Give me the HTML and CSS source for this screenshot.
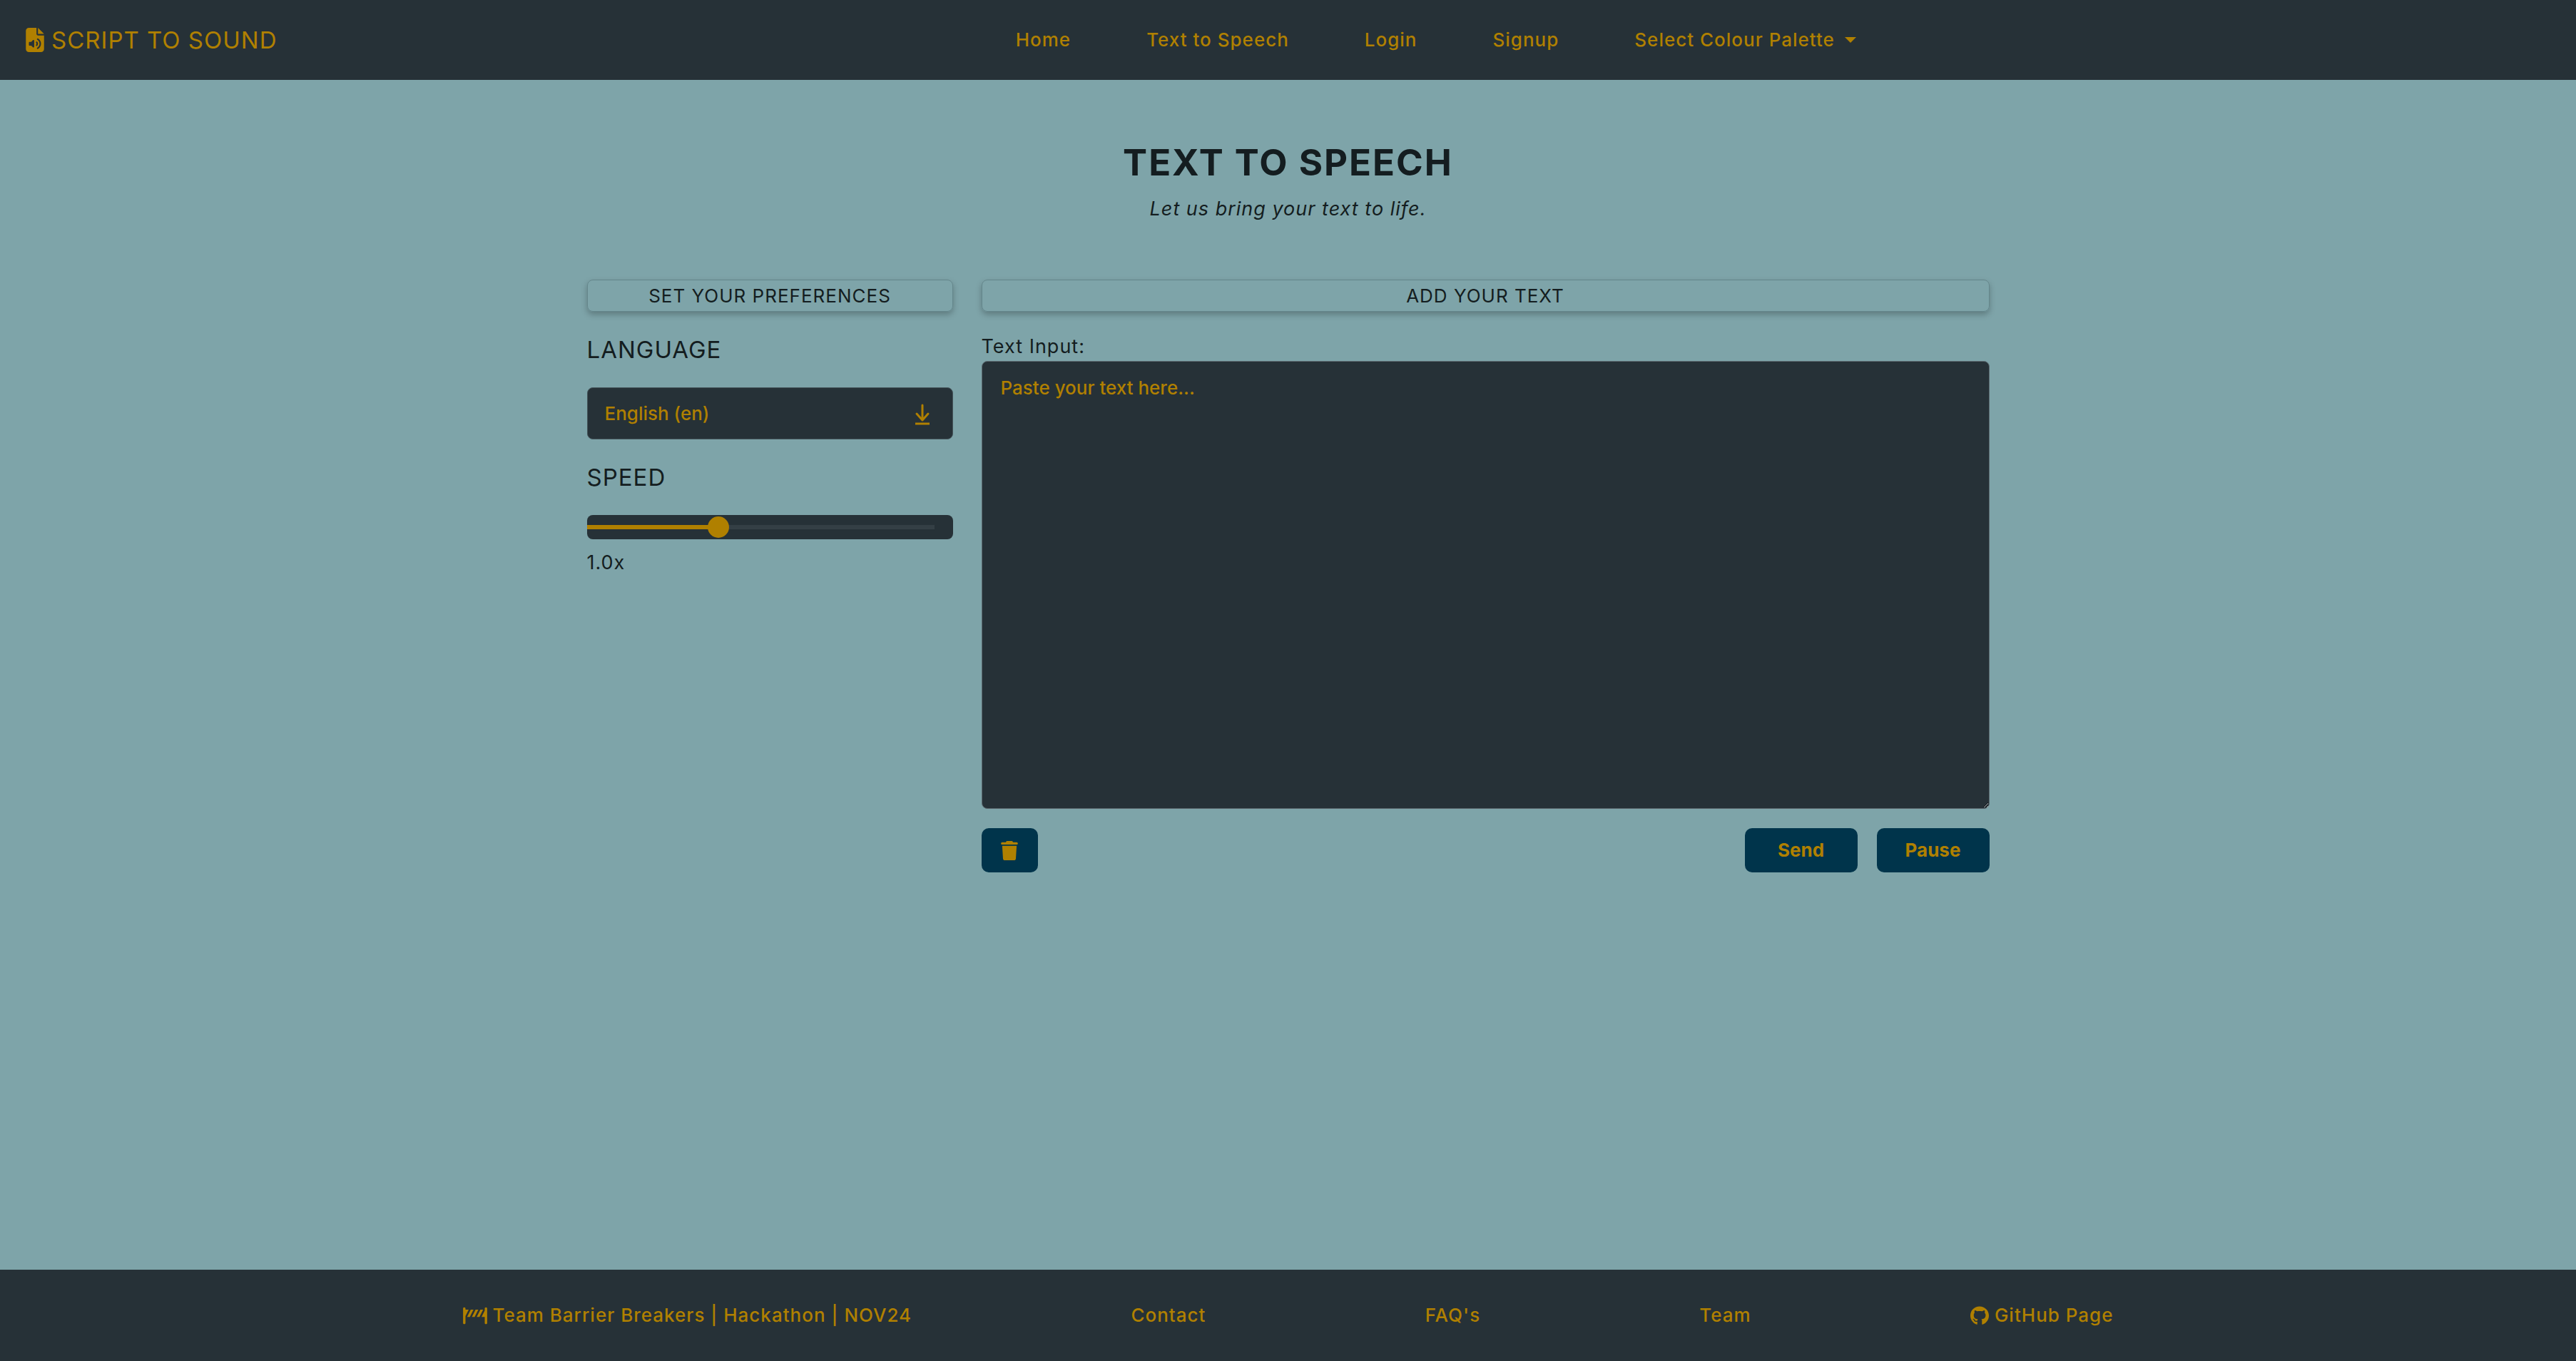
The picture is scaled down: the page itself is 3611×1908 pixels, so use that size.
FILE: index.html
```html
<!DOCTYPE html>
<html lang="en">
<head>
  <meta charset="utf-8">
  <meta name="viewport" content="width=device-width, initial-scale=1">
  <title>Script to Sound | Text to Speech</title>
  <link rel="stylesheet" href="styles.css">
</head>
<body>
  <header class="site-header">
    <a class="brand" href="#">
      <svg class="brand-icon" viewBox="0 0 384 512" aria-hidden="true"><path d="M64 0C28.7 0 0 28.7 0 64V448c0 35.3 28.7 64 64 64H320c35.3 0 64-28.7 64-64V160H256c-17.7 0-32-14.3-32-32V0H64zM256 0V128H384L256 0zm2 226.3c37.1 22.4 62 63.1 62 109.7s-24.9 87.3-62 109.7c-7.6 4.6-17.4 2.1-22-5.4s-2.1-17.4 5.4-22C269.4 401.5 288 370.9 288 336s-18.6-65.5-46.5-82.3c-7.6-4.6-10-14.4-5.4-22s14.4-10 22-5.4zm-91.9 30.9c6 2.5 9.9 8.3 9.9 14.8V400c0 6.5-3.9 12.3-9.9 14.8s-12.9 1.1-17.4-3.5L113.4 376H80c-8.8 0-16-7.2-16-16V312c0-8.8 7.2-16 16-16h33.4l35.3-35.3c4.6-4.6 11.5-5.9 17.4-3.5zm51 34.9c6.6-5.9 16.7-5.3 22.6 1.3C249.8 304.6 256 319.6 256 336s-6.2 31.4-16.3 42.7c-5.9 6.6-16 7.1-22.6 1.3s-7.1-16-1.3-22.6c5.1-5.7 8.1-13.1 8.1-21.3s-3.1-15.7-8.1-21.3c-5.9-6.6-5.3-16.7 1.3-22.6z"/></svg>
      SCRIPT TO SOUND
    </a>
    <nav class="main-nav" aria-label="Main">
      <a href="#">Home</a>
      <a href="#">Text to Speech</a>
      <a href="#">Login</a>
      <a href="#">Signup</a>
      <button class="palette-toggle" type="button" aria-haspopup="true" aria-expanded="false">Select Colour Palette</button>
    </nav>
  </header>

  <main class="page">
    <h1 class="title">TEXT TO SPEECH</h1>
    <p class="subtitle">Let us bring your text to life.</p>

    <div class="workspace">
      <section class="preferences">
        <h2 class="panel-heading">SET YOUR PREFERENCES</h2>
        <label class="field-title" for="language">LANGUAGE</label>
        <div class="select-box">
          <select id="language" class="select">
            <option selected>English (en)</option>
          </select>
          <svg class="select-arrow" viewBox="0 0 22 30" aria-hidden="true"><path d="M11 2v21M3 14l8 9 8-9" stroke-linecap="round" stroke-linejoin="round"/><path d="M1 28h20"/></svg>
        </div>
        <label class="field-title" for="speed">SPEED</label>
        <input id="speed" class="range" type="range" min="0.5" max="2" step="0.1" value="1">
        <output class="speed-value" for="speed">1.0x</output>
      </section>

      <section class="composer">
        <h2 class="panel-heading">ADD YOUR TEXT</h2>
        <label class="text-label" for="text">Text Input:</label>
        <textarea id="text" class="text-input" placeholder="Paste your text here..."></textarea>
        <div class="actions">
          <button class="btn btn-clear" type="button" aria-label="Clear text">
            <svg class="trash-icon" viewBox="0 0 448 512" aria-hidden="true"><path d="M135.2 17.7L128 32H32C14.3 32 0 46.3 0 64S14.3 96 32 96H416c17.7 0 32-14.3 32-32s-14.3-32-32-32H320l-7.2-14.3C307.4 6.8 296.3 0 284.2 0H163.8c-12.1 0-23.2 6.8-28.6 17.7zM416 128H32L53.2 467c1.6 25.3 22.6 45 47.9 45H346.9c25.3 0 46.3-19.7 47.9-45L416 128z"/></svg>
          </button>
          <button class="btn" type="button">Send</button>
          <button class="btn" type="button">Pause</button>
        </div>
      </section>
    </div>
  </main>

  <footer class="site-footer">
    <div class="footer-row">
      <span class="footer-item">
        <svg class="barrier-icon" viewBox="0 0 640 512" aria-hidden="true"><path d="M32 32C14.3 32 0 46.3 0 64V448c0 17.7 14.3 32 32 32s32-14.3 32-32V266.3L149.2 96H64V64c0-17.7-14.3-32-32-32zM405.2 96H330.8l-5.4 10.7L234.8 288h74.3l5.4-10.7L405.2 96zM362.8 288h74.3l5.4-10.7L533.2 96H458.8l-5.4 10.7L362.8 288zM202.8 96l-5.4 10.7L106.8 288h74.3l5.4-10.7L277.2 96H202.8zm288 192H576V448c0 17.7 14.3 32 32 32s32-14.3 32-32V64c0-17.7-14.3-32-32-32s-32 14.3-32 32v53.7L490.8 288z"/></svg>
        Team Barrier Breakers | Hackathon | NOV24
      </span>
      <a class="footer-item" href="#">Contact</a>
      <a class="footer-item" href="#">FAQ's</a>
      <a class="footer-item" href="#">Team</a>
      <a class="footer-item" href="#">
        <svg class="github-icon" viewBox="0 0 496 512" aria-hidden="true"><path d="M165.9 397.4c0 2-2.3 3.6-5.2 3.6-3.3.3-5.6-1.3-5.6-3.6 0-2 2.3-3.6 5.2-3.6 3-.3 5.6 1.3 5.6 3.6zm-31.1-4.5c-.7 2 1.3 4.3 4.3 4.9 2.6 1 5.6 0 6.2-2s-1.3-4.3-4.3-5.2c-2.6-.7-5.5.3-6.2 2.3zm44.2-1.7c-2.9.7-4.9 2.6-4.6 4.9.3 2 2.9 3.3 5.9 2.6 2.9-.7 4.9-2.6 4.6-4.6-.3-1.9-3-3.2-5.9-2.9zM244.8 8C106.1 8 0 113.3 0 252c0 110.9 69.8 205.8 169.5 239.2 12.8 2.3 17.3-5.6 17.3-12.1 0-6.2-.3-40.4-.3-61.4 0 0-70 15-84.7-29.8 0 0-11.4-29.1-27.8-36.6 0 0-22.9-15.7 1.6-15.4 0 0 24.9 2 38.6 25.8 21.9 38.6 58.6 27.5 72.9 20.9 2.3-16 8.8-27.1 16-33.7-55.9-6.2-112.3-14.3-112.3-110.5 0-27.5 7.6-41.3 23.6-58.9-2.6-6.5-11.1-33.3 2.6-67.9 20.9-6.5 69 27 69 27 20-5.6 41.5-8.5 62.8-8.5s42.8 2.9 62.8 8.5c0 0 48.1-33.6 69-27 13.7 34.7 5.2 61.4 2.6 67.9 16 17.7 25.8 31.5 25.8 58.9 0 96.5-58.9 104.2-114.8 110.5 9.2 7.9 17 22.9 17 46.4 0 33.7-.3 75.4-.3 83.6 0 6.5 4.6 14.4 17.3 12.1C428.2 457.8 496 362.9 496 252 496 113.3 383.5 8 244.8 8z"/></svg>
        GitHub Page
      </a>
    </div>
  </footer>
</body>
</html>
```
FILE: styles.css
```css
:root {
  --page: #7ea4a9;
  --dark: #263137;
  --gold: #b08000;
  --ink: #141d20;
  --navy: #00344b;
  --track: #343f45;
}

*,
*::before,
*::after {
  box-sizing: border-box;
}

body {
  margin: 0;
  min-height: 100vh;
  display: flex;
  flex-direction: column;
  background: var(--page);
  color: var(--ink);
  font-family: Inter, "Open Sans", sans-serif;
  font-size: 27px;
  line-height: 40px;
  letter-spacing: 1px;
}

svg {
  display: block;
  flex: none;
  fill: currentColor;
}

/* Header */
.site-header {
  display: flex;
  align-items: center;
  gap: 26px;
  min-height: 112px;
  padding-left: 36px;
  background: var(--dark);
  color: var(--gold);
  font-size: 26px;
  font-weight: 500;
}

.brand {
  display: flex;
  align-items: center;
  gap: 10px;
  color: inherit;
  font-size: 33px;
  font-weight: 400;
  text-decoration: none;
}

.brand-icon {
  width: 26px;
  height: 34px;
}

.main-nav {
  flex: 1;
  display: flex;
  justify-content: center;
  align-items: center;
  gap: 106px;
}

.main-nav a {
  color: inherit;
  text-decoration: none;
}

.palette-toggle {
  display: flex;
  align-items: center;
  gap: 14px;
  padding: 0;
  border: 0;
  background: none;
  color: inherit;
  font: inherit;
  letter-spacing: inherit;
  cursor: pointer;
}

.palette-toggle::after {
  content: "";
  border: 8px solid transparent;
  border-top-color: currentColor;
  border-bottom: 0;
}

/* Page content */
.page {
  flex: 1;
  width: 100%;
  max-width: 2014px;
  margin: 0 auto;
  padding: 86px 24px;
}

.title {
  margin: 0;
  font-size: 51px;
  font-weight: 700;
  letter-spacing: 2px;
  line-height: 60px;
  text-align: center;
}

.subtitle {
  margin: 15px 0 79px;
  font-style: italic;
  text-align: center;
}

.workspace {
  display: grid;
  grid-template-columns: 513fr 1413fr;
  gap: 40px;
}

.preferences,
.composer {
  display: flex;
  flex-direction: column;
  min-width: 0;
}

.panel-heading {
  margin: 0;
  padding: 2px;
  border: 1px solid #64868b;
  border-radius: 8px;
  box-shadow: 0 4px 8px rgba(0, 0, 0, 0.25);
  font-size: 26px;
  font-weight: 400;
  line-height: 39px;
  text-align: center;
}

.field-title {
  margin: 33px 0;
  font-size: 33px;
}

.select-box {
  position: relative;
}

.select {
  display: block;
  width: 100%;
  height: 73px;
  padding: 0 24px;
  border: 1px solid #46565c;
  border-radius: 8px;
  appearance: none;
  background: var(--dark);
  color: var(--gold);
  font: inherit;
  font-size: 26px;
  font-weight: 500;
}

.select-arrow {
  position: absolute;
  top: 23px;
  right: 32px;
  width: 22px;
  height: 30px;
  fill: none;
  stroke: var(--gold);
  stroke-width: 3;
  pointer-events: none;
}

.range {
  width: 100%;
  height: 34px;
  margin: 0;
  padding: 0 25px;
  appearance: none;
  border-radius: 8px;
  background:
    linear-gradient(var(--gold), var(--gold)) left / 36% 6px no-repeat,
    linear-gradient(var(--track), var(--track)) left / 95% 6px no-repeat,
    var(--dark);
}

.range::-webkit-slider-thumb {
  appearance: none;
  width: 30px;
  height: 30px;
  border-radius: 50%;
  background: var(--gold);
}

.range::-moz-range-thumb {
  width: 30px;
  height: 30px;
  border: 0;
  border-radius: 50%;
  background: var(--gold);
}

.speed-value {
  margin-top: 13px;
}

.text-label {
  margin-top: 29px;
}

.text-input {
  display: block;
  width: 100%;
  height: 628px;
  padding: 17px 26px;
  border: 1px solid #5c6a70;
  border-radius: 8px;
  resize: both;
  background: var(--dark);
  color: var(--gold);
  font: inherit;
  font-size: 26px;
  font-weight: 500;
}

.text-input::placeholder {
  color: inherit;
}

.actions {
  display: flex;
  gap: 27px;
  margin-top: 27px;
}

.btn {
  display: flex;
  align-items: center;
  justify-content: center;
  width: 158px;
  height: 62px;
  padding: 0;
  border: 0;
  border-radius: 10px;
  background: var(--navy);
  color: var(--gold);
  font: inherit;
  font-size: 26px;
  font-weight: 700;
  cursor: pointer;
}

.btn-clear {
  width: 79px;
  margin-right: auto;
}

.trash-icon {
  width: 24px;
  height: 27px;
}

/* Footer */
.site-footer {
  display: flex;
  align-items: center;
  justify-content: center;
  min-height: 128px;
  padding: 0 24px;
  background: var(--dark);
  color: var(--gold);
  font-size: 26px;
  font-weight: 500;
}

.footer-row {
  flex: 1;
  display: flex;
  justify-content: space-between;
  gap: 24px;
  max-width: 2314px;
}

.footer-item {
  display: flex;
  align-items: center;
  gap: 8px;
  color: inherit;
  text-decoration: none;
}

.barrier-icon {
  width: 34px;
  height: 27px;
}

.github-icon {
  width: 26px;
  height: 27px;
}
```
